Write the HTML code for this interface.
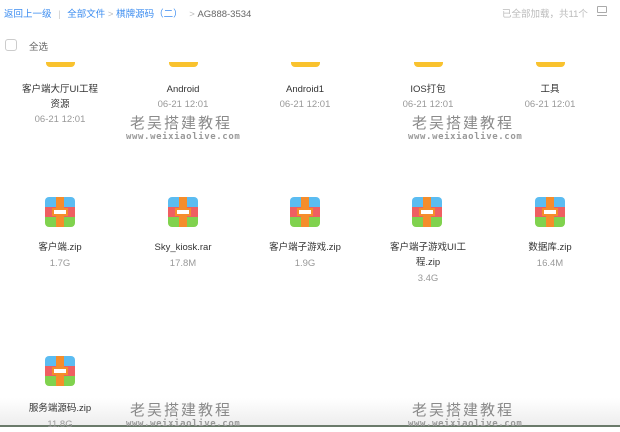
<!DOCTYPE html>
<html><head><meta charset="utf-8"><style>
*{margin:0;padding:0;box-sizing:border-box}
body{width:620px;height:427px;overflow:hidden;background:#fff;font-family:"Liberation Sans","Noto Sans CJK SC",sans-serif;position:relative;color:#333}
.a{position:absolute;white-space:nowrap}
.c{position:absolute;width:120px;text-align:center;font-size:9.5px;line-height:15px}
.n{color:#333}
.d{color:#999}
.fold{position:absolute;width:29px;height:5px;background:#f9c22e;border-radius:0 0 4px 4px;top:62px}
.zip{position:absolute;width:30px;height:30px;border-radius:4px;overflow:hidden}
.zip .b{position:absolute;left:0;right:0;top:0;height:10px;background:#5bbcf1}
.zip .r{position:absolute;left:0;right:0;top:10px;height:10px;background:#ef5f62}
.zip .g{position:absolute;left:0;right:0;top:20px;height:10px;background:#80d24e}
.zip .o{position:absolute;left:11px;width:8px;top:0;bottom:0;background:#f58d2b}
.zip .k{position:absolute;left:7px;top:11px;width:16px;height:8px;background:#fff;border:2px solid #f58d2b}
.wm{position:absolute;text-align:center;width:110px;white-space:nowrap}
.wm b{display:block;font-size:15px;letter-spacing:2px;font-weight:normal;line-height:17px;color:#8a8a8a}
.wm i{display:block;font-style:normal;font-size:9px;letter-spacing:0.6px;font-weight:bold;line-height:10px;color:#999;font-family:"DejaVu Sans Mono",monospace}
</style></head><body>
<div class="a" style="left:4px;top:6px;font-size:9.5px;color:#3b8cf0">返回上一级 <span style="color:#ccc;margin:0 4px">|</span> 全部文件 <span style="color:#bbb">&gt;</span> 棋牌源码（二） <span style="color:#bbb;margin-left:4px">&gt;</span> <span style="color:#666">AG888-3534</span></div>
<div class="a" style="left:502px;top:6px;font-size:9.5px;color:#bbb">已全部加载，共11个</div>
<div class="a" style="left:597px;top:6px;width:10px;height:7px;border:1px solid #aaa;border-radius:1px"></div>
<div class="a" style="left:597px;top:15px;width:10px;height:1px;background:#aaa"></div>
<div class="a" style="left:5px;top:39px;width:12px;height:12px;border:1px solid #ccc;border-radius:3px"></div>
<div class="a" style="left:29px;top:39px;font-size:9.5px;color:#666">全选</div>

<div class="fold" style="left:46px"></div><div class="fold" style="left:169px"></div><div class="fold" style="left:291px"></div><div class="fold" style="left:414px"></div><div class="fold" style="left:536px"></div>
<div class="c" style="left:0;top:82px"><div class="n">客户端大厅UI工程<br>资源</div><div class="d">06-21 12:01</div></div>
<div class="c" style="left:123px;top:82px"><div class="n">Android</div><div class="d">06-21 12:01</div></div>
<div class="c" style="left:245px;top:82px"><div class="n">Android1</div><div class="d">06-21 12:01</div></div>
<div class="c" style="left:368px;top:82px"><div class="n">IOS打包</div><div class="d">06-21 12:01</div></div>
<div class="c" style="left:490px;top:82px"><div class="n">工具</div><div class="d">06-21 12:01</div></div>

<div class="zip" style="left:45px;top:197px"><div class="b"></div><div class="r"></div><div class="g"></div><div class="o"></div><div class="k"></div></div>
<div class="zip" style="left:168px;top:197px"><div class="b"></div><div class="r"></div><div class="g"></div><div class="o"></div><div class="k"></div></div>
<div class="zip" style="left:290px;top:197px"><div class="b"></div><div class="r"></div><div class="g"></div><div class="o"></div><div class="k"></div></div>
<div class="zip" style="left:412px;top:197px"><div class="b"></div><div class="r"></div><div class="g"></div><div class="o"></div><div class="k"></div></div>
<div class="zip" style="left:535px;top:197px"><div class="b"></div><div class="r"></div><div class="g"></div><div class="o"></div><div class="k"></div></div>
<div class="c" style="left:0;top:240px"><div class="n">客户端.zip</div><div class="d" style="margin-top:1px">1.7G</div></div>
<div class="c" style="left:123px;top:240px"><div class="n">Sky_kiosk.rar</div><div class="d" style="margin-top:1px">17.8M</div></div>
<div class="c" style="left:245px;top:240px"><div class="n">客户端子游戏.zip</div><div class="d" style="margin-top:1px">1.9G</div></div>
<div class="c" style="left:368px;top:240px"><div class="n">客户端子游戏UI工<br>程.zip</div><div class="d" style="margin-top:1px">3.4G</div></div>
<div class="c" style="left:490px;top:240px"><div class="n">数据库.zip</div><div class="d" style="margin-top:1px">16.4M</div></div>

<div class="zip" style="left:45px;top:356px"><div class="b"></div><div class="r"></div><div class="g"></div><div class="o"></div><div class="k"></div></div>
<div class="a" style="left:0;top:398px;width:620px;height:29px;background:linear-gradient(#fff,#ececec)"></div>
<div class="a" style="left:0;top:425px;width:620px;height:2px;background:#6a7a6a"></div>
<div class="c" style="left:0;top:401px"><div class="n">服务端源码.zip</div><div class="d" style="margin-top:1px">11.8G</div></div>

<div class="wm" style="left:126px;top:115px"><b>老吴搭建教程</b><i>www.weixiaolive.com</i></div>
<div class="wm" style="left:408px;top:115px"><b>老吴搭建教程</b><i>www.weixiaolive.com</i></div>
<div class="wm" style="left:126px;top:402px"><b>老吴搭建教程</b><i>www.weixiaolive.com</i></div>
<div class="wm" style="left:408px;top:402px"><b>老吴搭建教程</b><i>www.weixiaolive.com</i></div>
</body></html>
